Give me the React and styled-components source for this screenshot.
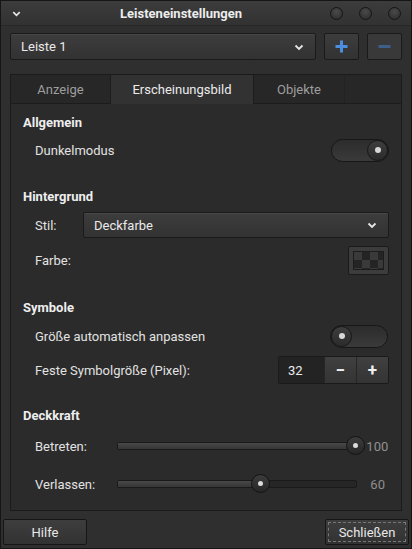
import styled, { createGlobalStyle } from "styled-components";

const GlobalStyle = createGlobalStyle`
  html, body {
    margin: 0;
    padding: 0;
    background: #1b1b1b;
  }
  body {
    font-family: Roboto, "Noto Sans", sans-serif;
    font-size: 13px;
    color: #e4e4e4;
  }
`;

const Window = styled.div`
  width: 412px;
  height: 549px;
  box-sizing: border-box;
  border: 1px solid #161616;
  background: #2f2f2f;
  display: flex;
  flex-direction: column;
`;

const TitleBar = styled.div`
  height: 24px;
  flex: none;
  display: flex;
  align-items: center;
  padding: 0 10px 0 10px;
  background: linear-gradient(#3c3c3c, #323232);
  border-bottom: 1px solid #272727;
`;

const Title = styled.div`
  flex: 1;
  text-align: center;
  font-weight: 700;
  font-size: 13px;
  color: #ececec;
  padding-left: 26px;
`;

const TitleDot = styled.span`
  width: 11px;
  height: 11px;
  border-radius: 50%;
  margin-left: 16px;
  background: radial-gradient(circle at 50% 35%, #4a4a4a, #2a2a2a);
  border: 1px solid #151515;
`;

const Body = styled.div`
  flex: 1;
  display: flex;
  flex-direction: column;
  padding: 7px 9px 0 9px;
`;

const TopRow = styled.div`
  display: flex;
  gap: 8px;
`;

const Combo = styled.div`
  flex: 1;
  height: ${(p) => p.$h || 27}px;
  box-sizing: border-box;
  display: flex;
  align-items: center;
  justify-content: space-between;
  padding: 0 10px;
  border: 1px solid #1a1a1a;
  border-radius: 2px;
  background: linear-gradient(#3d3d3d, #323232);
  box-shadow: inset 0 1px 0 rgba(255, 255, 255, 0.06);
  color: #eaeaea;
`;

const SquareButton = styled.div`
  width: 35px;
  height: 27px;
  box-sizing: border-box;
  display: flex;
  align-items: center;
  justify-content: center;
  border: 1px solid #1a1a1a;
  border-radius: 2px;
  background: ${(p) => (p.$flat ? "#393939" : "linear-gradient(#3d3d3d, #323232)")};
`;

const Notebook = styled.div`
  margin-top: 14px;
  border: 1px solid #1b1b1b;
  display: flex;
  flex-direction: column;
  height: 437px;
  box-sizing: border-box;
`;

const TabRow = styled.div`
  display: flex;
  height: 28px;
  background: #272727;
  border-bottom: 1px solid #1c1c1c;
`;

const Tab = styled.div`
  width: ${(p) => p.$w}px;
  box-sizing: border-box;
  display: flex;
  align-items: center;
  justify-content: center;
  color: ${(p) => (p.$active ? "#ececec" : "#9e9e9e")};
  background: ${(p) => (p.$active ? "#323232" : "transparent")};
  border-left: 1px solid ${(p) => (p.$active ? "#1c1c1c" : "transparent")};
  border-right: 1px solid ${(p) => (p.$active ? "#1c1c1c" : "transparent")};
  margin-bottom: ${(p) => (p.$active ? "-1px" : "0")};
`;

const TabFill = styled.div`
  flex: 1;
  border-left: 1px solid #222;
`;

const Panel = styled.div`
  flex: 1;
  background: #2b2b2b;
  padding: 9px 12px 0 12px;
  display: flex;
  flex-direction: column;
`;

const SectionTitle = styled.div`
  font-weight: 700;
  color: #eeeeee;
  height: 18px;
  display: flex;
  align-items: center;
  margin-top: ${(p) => p.$top || 0}px;
`;

const Row = styled.div`
  display: flex;
  align-items: center;
  padding-left: 12px;
  height: ${(p) => p.$h || 26}px;
  margin-top: ${(p) => p.$top || 0}px;
`;

const Label = styled.div`
  flex: ${(p) => (p.$grow ? 1 : "none")};
  width: ${(p) => (p.$w ? `${p.$w}px` : "auto")};
  color: #e2e2e2;
`;

const Switch = styled.div`
  width: 58px;
  height: 23px;
  box-sizing: border-box;
  border-radius: 12px;
  border: 1px solid #171717;
  background: linear-gradient(#2c2c2c, #3a3a3a);
  display: flex;
  justify-content: ${(p) => (p.$on ? "flex-end" : "flex-start")};
  margin-right: ${(p) => p.$mr || 0}px;
`;

const Knob = styled.div`
  width: 21px;
  height: 21px;
  box-sizing: border-box;
  border-radius: 50%;
  border: 1px solid #161616;
  background: linear-gradient(#3e3e3e, #2b2b2b);
  display: flex;
  align-items: center;
  justify-content: center;
  &::after {
    content: "";
    width: 6px;
    height: 6px;
    border-radius: 50%;
    background: #d8d8d8;
  }
`;

const Swatch = styled.div`
  width: 41px;
  height: 29px;
  box-sizing: border-box;
  border: 1px solid #1a1a1a;
  border-radius: 2px;
  background: #3c3c3c;
  padding: 4px 4px;
  display: flex;
`;

const Checker = styled.div`
  flex: 1;
  border: 1px solid #1c1c1c;
  background-color: #3a3a3a;
  background-image:
    linear-gradient(45deg, #242424 25%, transparent 25%, transparent 75%, #242424 75%),
    linear-gradient(45deg, #242424 25%, transparent 25%, transparent 75%, #242424 75%);
  background-size: 16px 16px;
  background-position: 0 0, 8px 8px;
`;

const Spin = styled.div`
  display: flex;
  height: 26px;
  border: 1px solid #1a1a1a;
  border-radius: 2px;
  overflow: hidden;
`;

const SpinEntry = styled.div`
  width: 45px;
  background: #232323;
  display: flex;
  align-items: center;
  padding-left: 9px;
  box-sizing: border-box;
  color: #ececec;
`;

const SpinButton = styled.div`
  width: 31px;
  display: flex;
  align-items: center;
  justify-content: center;
  background: linear-gradient(#404040, #343434);
  border-left: 1px solid #262626;
  color: #f0f0f0;
  font-size: 17px;
  font-weight: 700;
`;

const Track = styled.div`
  position: relative;
  width: 244px;
  height: 8px;
  margin-left: 2px;
  box-sizing: border-box;
  border: 1px solid #1a1a1a;
  border-radius: 2px;
  background: #262626;
`;

const TrackFill = styled.div`
  height: 100%;
  background: linear-gradient(#484848, #363636);
`;

const SliderKnob = styled.div`
  position: absolute;
  top: 50%;
  width: 19px;
  height: 19px;
  margin: -10px 0 0 -10px;
  box-sizing: border-box;
  border-radius: 50%;
  border: 1px solid #141414;
  background: linear-gradient(#3c3c3c, #272727);
  display: flex;
  align-items: center;
  justify-content: center;
  &::after {
    content: "";
    width: 5px;
    height: 5px;
    border-radius: 50%;
    background: #dcdcdc;
  }
`;

const SliderValue = styled.div`
  width: 32px;
  padding-left: 9px;
  box-sizing: border-box;
  color: #8f8f8f;
  text-align: ${(p) => (p.$center ? "center" : "left")};
`;

const Footer = styled.div`
  display: flex;
  justify-content: space-between;
  padding: 8px 2px 0 2px;
  margin: 0 -9px;
`;

const DialogButton = styled.div`
  width: 84px;
  height: 26px;
  box-sizing: border-box;
  border: 1px solid #161616;
  border-radius: 2px;
  background: linear-gradient(#3e3e3e, #323232);
  display: flex;
  align-items: center;
  justify-content: center;
  color: #e8e8e8;
  position: relative;
  ${(p) =>
    p.$focus &&
    `&::after {
      content: "";
      position: absolute;
      inset: 2px;
      border: 1px dashed #777;
    }`}
`;

const Chevron = ({ size = 12, color = "#e6e6e6" }) => (
  <svg width={size} height={size} viewBox="0 0 12 12">
    <path d="M2.5 4.5 L6 8 L9.5 4.5" fill="none" stroke={color} strokeWidth="1.8" />
  </svg>
);

const PlusIcon = ({ color = "#4c8de0" }) => (
  <svg width="13" height="13" viewBox="0 0 13 13">
    <rect x="5" y="0.5" width="3" height="12" fill={color} />
    <rect x="0.5" y="5" width="12" height="3" fill={color} />
  </svg>
);

const MinusIcon = () => (
  <svg width="13" height="13" viewBox="0 0 13 13">
    <rect x="0.5" y="5" width="12" height="3" fill="#3e5f8a" />
  </svg>
);

const Slider = ({ value }) => (
  <Track>
    <TrackFill style={{ width: `${value}%` }} />
    <SliderKnob style={{ left: `${value}%` }} />
  </Track>
);

export default function App() {
  return (
    <>
      <GlobalStyle />
      <Window>
        <TitleBar>
          <Chevron size={11} />
          <Title>Leisteneinstellungen</Title>
          <TitleDot />
          <TitleDot />
          <TitleDot />
        </TitleBar>
        <Body>
          <TopRow>
            <Combo>
              <span>Leiste 1</span>
              <Chevron />
            </Combo>
            <SquareButton>
              <PlusIcon />
            </SquareButton>
            <SquareButton $flat>
              <MinusIcon />
            </SquareButton>
          </TopRow>

          <Notebook>
            <TabRow>
              <Tab $w={99}>Anzeige</Tab>
              <Tab $w={144} $active>
                Erscheinungsbild
              </Tab>
              <Tab $w={90}>Objekte</Tab>
              <TabFill />
            </TabRow>
            <Panel>
              <SectionTitle>Allgemein</SectionTitle>
              <Row $top={6}>
                <Label $grow>Dunkelmodus</Label>
                <Switch $on>
                  <Knob />
                </Switch>
              </Row>

              <SectionTitle $top={24}>Hintergrund</SectionTitle>
              <Row $top={7}>
                <Label $w={48}>Stil:</Label>
                <Combo $h={26}>
                  <span>Deckfarbe</span>
                  <Chevron />
                </Combo>
              </Row>
              <Row $top={7} $h={30}>
                <Label $grow>Farbe:</Label>
                <Swatch>
                  <Checker />
                </Swatch>
              </Row>

              <SectionTitle $top={23}>Symbole</SectionTitle>
              <Row $top={7}>
                <Label $grow>Größe automatisch anpassen</Label>
                <Switch $mr={1}>
                  <Knob />
                </Switch>
              </Row>
              <Row $top={8}>
                <Label $grow>Feste Symbolgröße (Pixel):</Label>
                <Spin>
                  <SpinEntry>32</SpinEntry>
                  <SpinButton>−</SpinButton>
                  <SpinButton>+</SpinButton>
                </Spin>
              </Row>

              <SectionTitle $top={23}>Deckkraft</SectionTitle>
              <Row $top={9}>
                <Label $w={80}>Betreten:</Label>
                <Slider value={100} />
                <SliderValue>100</SliderValue>
              </Row>
              <Row $top={12}>
                <Label $w={80}>Verlassen:</Label>
                <Slider value={60} />
                <SliderValue $center>60</SliderValue>
              </Row>
            </Panel>
          </Notebook>

          <Footer>
            <DialogButton>Hilfe</DialogButton>
            <DialogButton $focus>Schließen</DialogButton>
          </Footer>
        </Body>
      </Window>
    </>
  );
}
